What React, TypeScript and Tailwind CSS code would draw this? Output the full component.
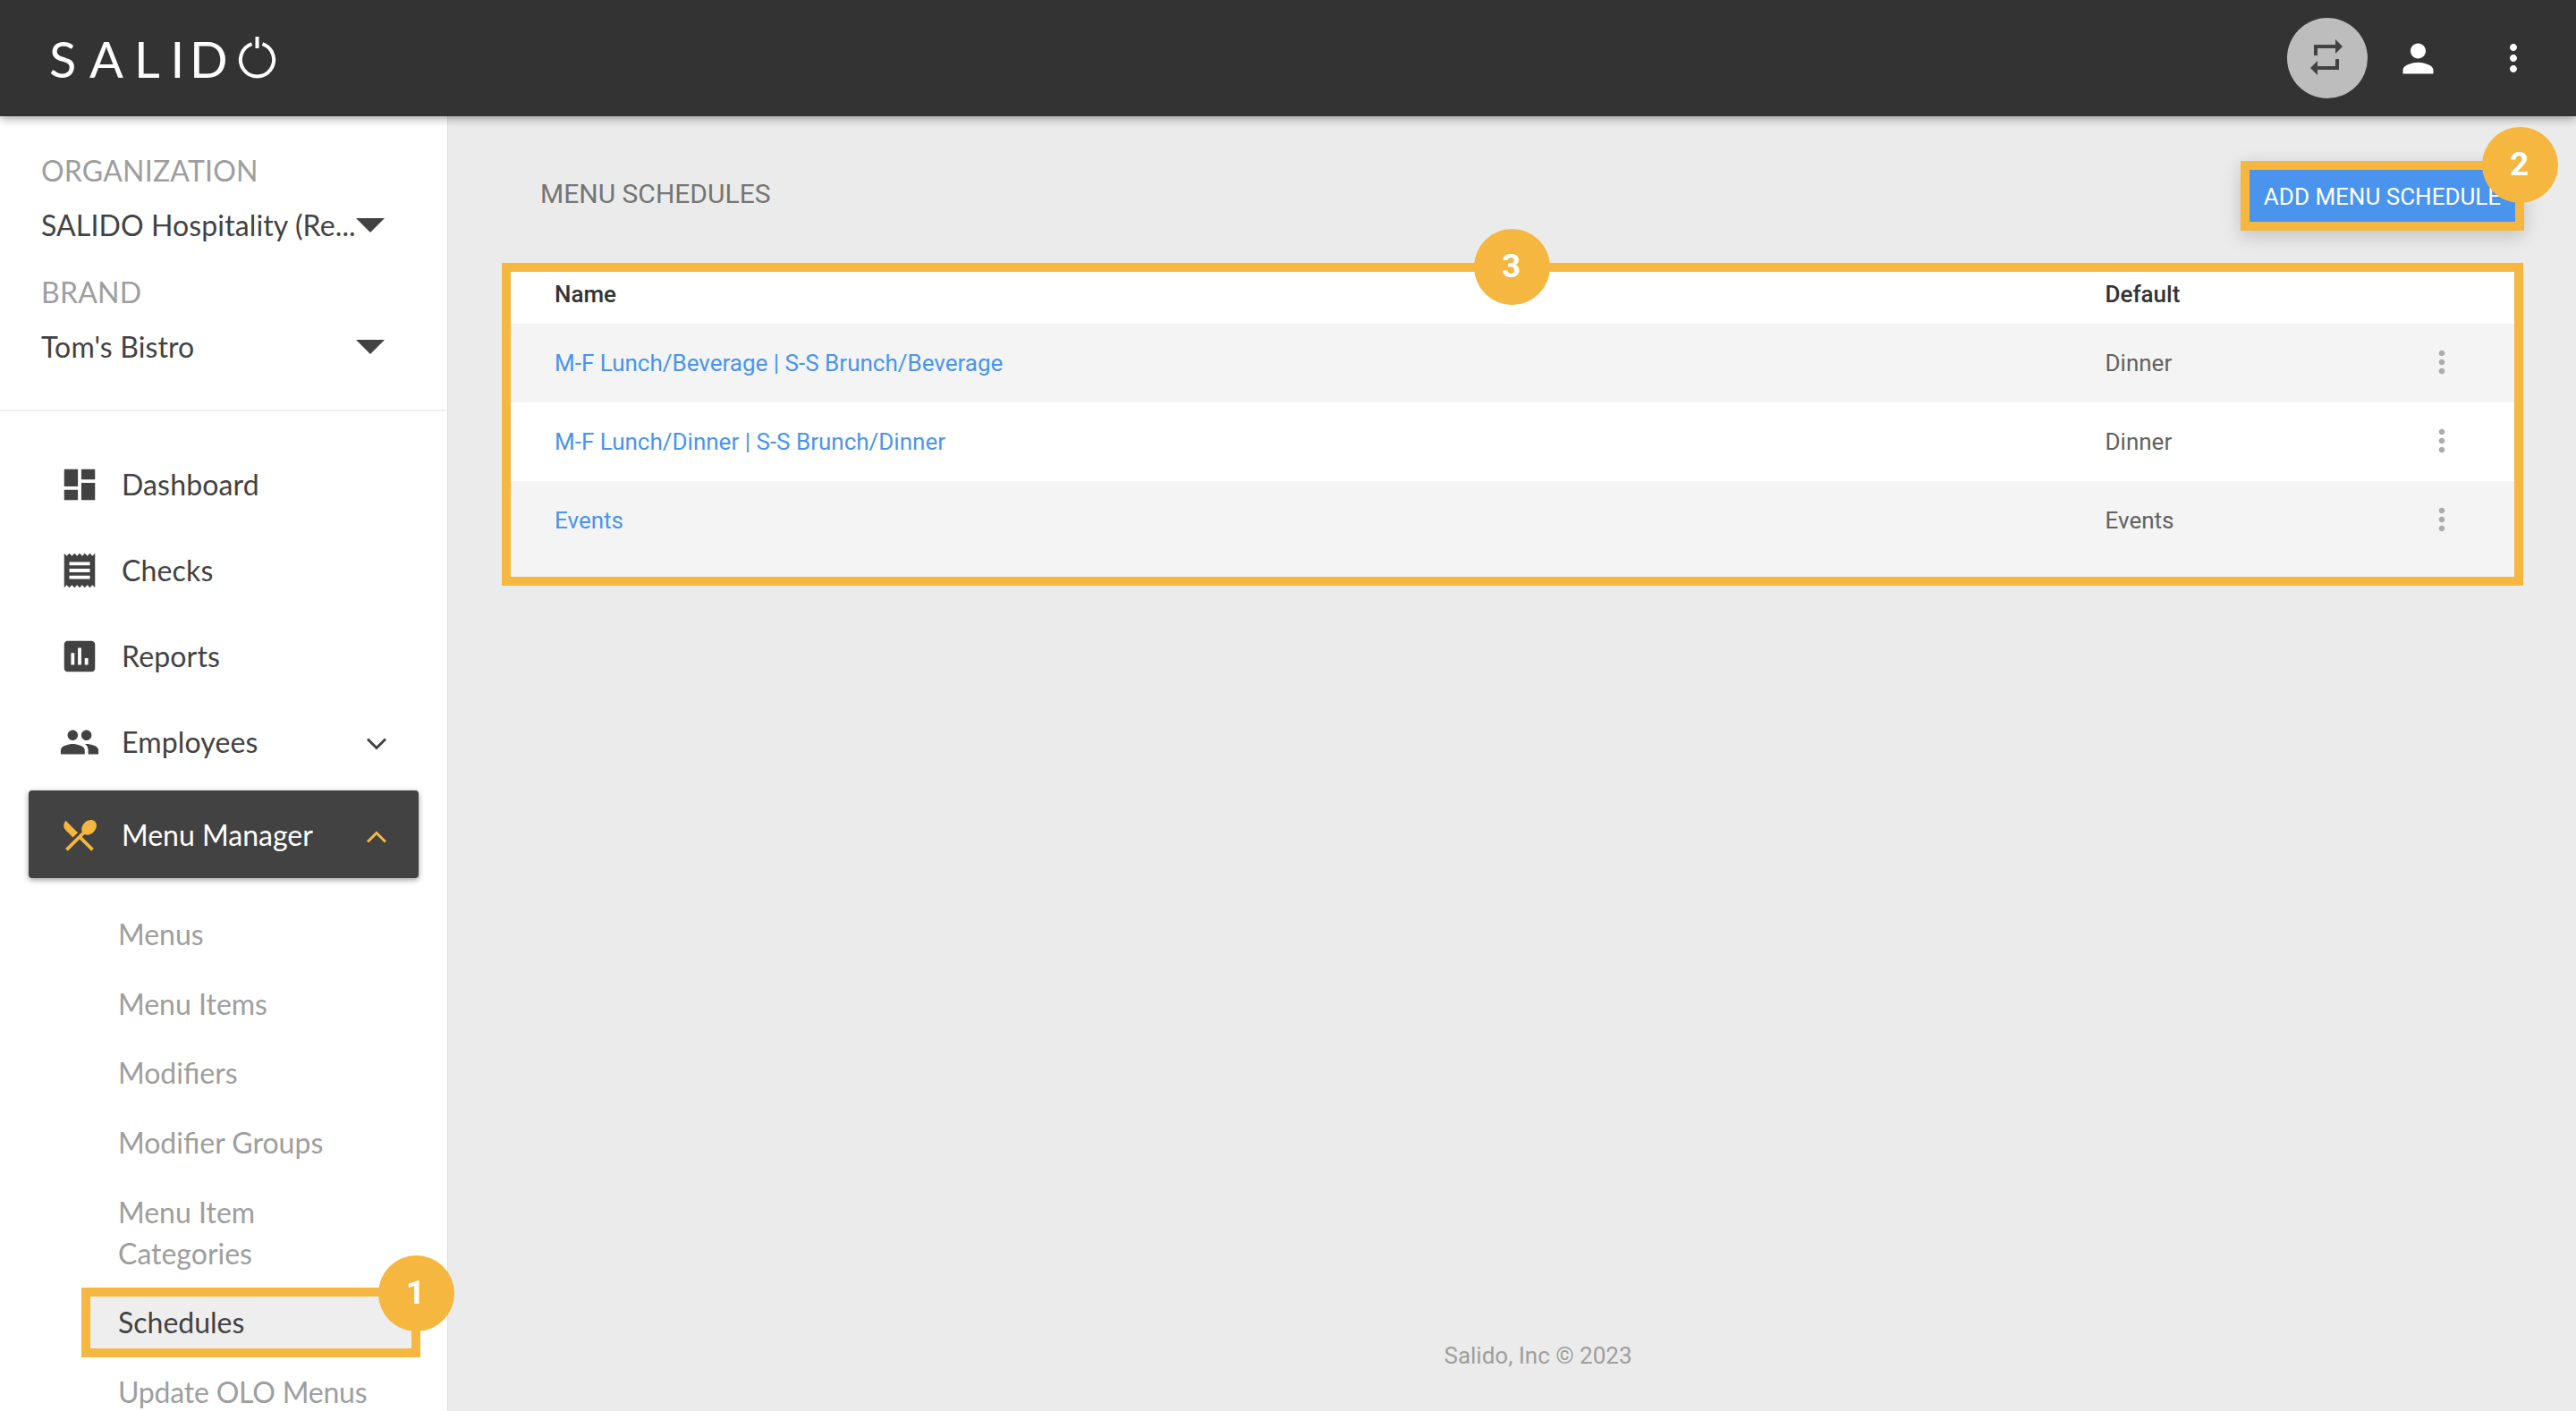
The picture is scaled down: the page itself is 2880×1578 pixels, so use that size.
import { useState } from 'react'
import type { ReactNode } from 'react'
import {
  MdAssessment,
  MdDashboard,
  MdMoreVert,
  MdPeople,
  MdPerson,
  MdReceipt,
  MdRepeat,
} from 'react-icons/md'
import { clsx } from 'clsx'

interface Schedule {
  id: number
  name: string
  defaultMenu: string
}

const SCHEDULES: Schedule[] = [
  { id: 1, name: 'M-F Lunch/Beverage | S-S Brunch/Beverage', defaultMenu: 'Dinner' },
  { id: 2, name: 'M-F Lunch/Dinner | S-S Brunch/Dinner', defaultMenu: 'Dinner' },
  { id: 3, name: 'Events', defaultMenu: 'Events' },
]

const MENU_LINKS = [
  'Menus',
  'Menu Items',
  'Modifiers',
  'Modifier Groups',
  'Menu Item Categories',
  'Schedules',
  'Update OLO Menus',
]

function Logo() {
  return (
    <svg width="260" height="80" viewBox="0 0 260 80" fill="none" aria-label="SALIDO">
      <text x="3 48 98 138.5 160" y="62" fill="#fff" className="font-['Lato'] text-[56px]">
        SALID
      </text>
      {/* power button "O" */}
      <path d="M229.5 24.2 A18.6 18.6 0 1 0 241.5 24.2" stroke="#fff" strokeWidth="4" />
      <path d="M235.5 16 V29" stroke="#fff" strokeWidth="4" />
    </svg>
  )
}

function RestaurantIcon() {
  return (
    <svg width="46" height="46" viewBox="0 0 24 24" fill="currentColor">
      <path d="M8.1 13.34l2.83-2.83L3.91 3.5a4.008 4.008 0 0 0 0 5.66l4.19 4.18zm6.78-1.81c1.53.71 3.68.21 5.27-1.38 1.91-1.91 2.28-4.65.81-6.12-1.46-1.46-4.2-1.1-6.12.81-1.59 1.59-2.09 3.74-1.38 5.27L3.7 19.87l1.41 1.41L12 14.41l6.88 6.88 1.41-1.41L13.41 13l1.47-1.47z" />
    </svg>
  )
}

function Chevron({ up }: { up?: boolean }) {
  return (
    <svg width="24" height="16" viewBox="0 0 24 16" fill="none" stroke="currentColor" strokeWidth="3">
      <path d={up ? 'M2 13.5 L12 3.5 L22 13.5' : 'M2 2.5 L12 12.5 L22 2.5'} />
    </svg>
  )
}

function Badge({ n, className }: { n: number; className: string }) {
  return (
    <span
      className={clsx(
        "absolute z-10 flex size-[85px] items-center justify-center rounded-full bg-[#f5b73f] pr-0.5 pb-[3px] font-['Roboto',sans-serif] text-[37px] leading-none font-bold text-white",
        className
      )}
    >
      {n}
    </span>
  )
}

function Picker({ label, value }: { label: string; value: string }) {
  return (
    <div className="leading-[61px]">
      <div className="tracking-[0.2px] text-[#9e9e9e]">{label}</div>
      <button type="button" className="flex w-[384px] items-center text-[#424242]">
        <span className="w-[352px] text-left tracking-[0.12px] whitespace-nowrap">{value}</span>
        <svg width="32" height="16" viewBox="0 0 32 16" fill="currentColor">
          <path d="M0 0h32L16 16z" />
        </svg>
      </button>
    </div>
  )
}

function NavItem({ icon, label, children }: { icon: ReactNode; label: string; children?: ReactNode }) {
  return (
    <a className="flex h-24 items-center pr-[67px] pl-[66px] text-[#424242]">
      <span className="w-[70px]">{icon}</span>
      <span className="flex-1 tracking-[0.15px]">{label}</span>
      {children}
    </a>
  )
}

function Sidebar() {
  const [active, setActive] = useState('Schedules')

  return (
    <aside className="w-[501px] shrink-0 border-r border-[#dedede] bg-white font-['Lato',sans-serif] text-[32px]">
      <div className="flex flex-col gap-3.5 border-b-2 border-[#eeeeee] pt-[30px] pb-10 pl-[46px]">
        <Picker label="ORGANIZATION" value="SALIDO Hospitality (Re..." />
        <Picker label="BRAND" value="Tom's Bistro" />
      </div>

      <nav className="pt-[34px]">
        <NavItem icon={<MdDashboard size={46} />} label="Dashboard" />
        <NavItem icon={<MdReceipt size={46} />} label="Checks" />
        <NavItem icon={<MdAssessment size={46} />} label="Reports" />
        <NavItem icon={<MdPeople size={46} />} label="Employees">
          <span className="pt-1"><Chevron /></span>
        </NavItem>

        <a className="mx-8 mt-1.5 flex h-[98px] items-center rounded bg-[#424242] pt-px pr-[35px] pl-[34px] text-white shadow-[0_2px_6px_rgba(0,0,0,0.4)]">
          <span className="w-[70px] text-[#f5b73f]"><RestaurantIcon /></span>
          <span className="flex-1">Menu Manager</span>
          <span className="pt-1 text-[#f5b73f]"><Chevron up /></span>
        </a>

        <ul className="pt-6 pr-[30px] pl-[91px] leading-[45.7px]">
          {MENU_LINKS.map((link) => (
            <li
              key={link}
              onClick={() => setActive(link)}
              className={clsx(
                'relative',
                link === active
                  ? 'h-[77.7px] border-10 border-[#f5b73f] bg-[#eeeeee] py-1.5 pl-[31px] text-[#424242]'
                  : 'py-4 pr-20 pl-[41px] text-[#9e9e9e]',
                link === 'Update OLO Menus' && 'tracking-[-0.2px] whitespace-nowrap'
              )}
            >
              {link}
              {link === 'Schedules' && <Badge n={1} className="-top-[46px] -right-[48px]" />}
            </li>
          ))}
        </ul>
      </nav>
    </aside>
  )
}

function Header() {
  return (
    <header className="relative z-20 flex h-[130px] shrink-0 items-center justify-between bg-[#333333] pr-[46px] pl-[52px] text-white shadow-[0_2px_10px_rgba(0,0,0,0.4)]">
      <Logo />
      <div className="flex items-center">
        <button type="button" className="flex size-[90px] items-center justify-center rounded-full bg-[#bdbdbd] pr-0.5 pb-0.5 text-[#424242]">
          <MdRepeat size={48} />
        </button>
        <MdPerson size={51} className="ml-[31px]" />
        <MdMoreVert size={48} className="ml-[57px]" />
      </div>
    </header>
  )
}

function ScheduleTable() {
  return (
    <section className="relative ml-[60px] h-[361px] w-[2260px] border-10 border-[#f5b73f] bg-[#f4f4f4] text-[26px]">
      <div className="flex h-[58px] bg-white pl-[49px] leading-[50px] font-medium text-[#333333]">
        <span className="w-[1733.5px]">Name</span>
        <span>Default</span>
      </div>
      {SCHEDULES.map((s) => (
        <div key={s.id} className="flex h-[88px] items-center pl-[49px] odd:bg-white even:bg-[#f4f4f4]">
          <a className="w-[1733.5px] text-[#4a94ee]">{s.name}</a>
          <span className="w-[356.5px] text-[#616161]">{s.defaultMenu}</span>
          <MdMoreVert size={40} className="mb-0.5 text-[#acacac]" />
        </div>
      ))}
      <Badge n={3} className="-top-[48px] left-[1077px]" />
    </section>
  )
}

export default function App() {
  return (
    <div className="flex h-[1578px] w-[2880px] flex-col overflow-hidden bg-[#ebebeb] font-['Roboto',sans-serif]">
      <Header />
      <div className="flex min-h-0 flex-1">
        <Sidebar />
        <main className="flex flex-1 flex-col">
          <div className="flex h-[164px] items-start justify-between pt-[50px] pr-[58px] pl-[103px]">
            <h1 className="pt-[17px] text-[30px] leading-[40px] text-[#757575]">MENU SCHEDULES</h1>
            <div className="relative">
              <button
                type="button"
                className="h-[78px] w-[317px] border-10 border-[#f5b73f] bg-[#4a94ee] pt-0.5 text-[26px] text-white shadow-[0_6px_20px_rgba(0,0,0,0.18)]"
              >
                ADD MENU SCHEDULE
              </button>
              <Badge n={2} className="-top-[38px] -right-[38px]" />
            </div>
          </div>
          <ScheduleTable />
          <footer className="mt-auto pb-[42px] pl-[58px] text-center text-[26px] leading-10 text-[#9e9e9e]">
            Salido, Inc © 2023
          </footer>
        </main>
      </div>
    </div>
  )
}
